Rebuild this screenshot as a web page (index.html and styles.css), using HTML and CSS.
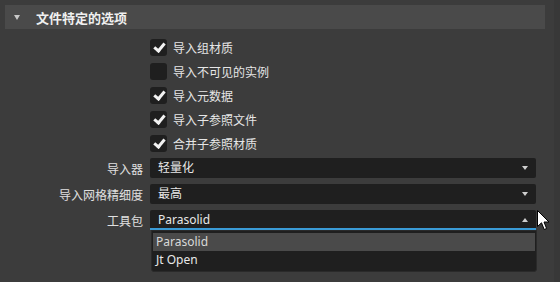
FILE: index.html
```html
<!DOCTYPE html>
<html lang="zh-CN">
<head>
    <meta charset="UTF-8">
    <title>文件特定的选项</title>
    <link rel="stylesheet" href="styles.css">
</head>
<body>
    <div class="panel">
        <!-- Section header -->
        <div class="section-head">
            <span class="caret"></span>
            <span class="section-title">文件特定的选项</span>
        </div>

        <div class="form">
            <div class="checks">
                <label class="check"><span class="box on"></span>导入组材质</label>
                <label class="check"><span class="box"></span>导入不可见的实例</label>
                <label class="check"><span class="box on"></span>导入元数据</label>
                <label class="check"><span class="box on"></span>导入子参照文件</label>
                <label class="check"><span class="box on"></span>合并子参照材质</label>
            </div>

            <div class="fields">
                <div class="field">
                    <span class="field-label">导入器</span>
                    <div class="select">轻量化<span class="arrow"></span></div>
                </div>
                <div class="field">
                    <span class="field-label">导入网格精细度</span>
                    <div class="select">最高<span class="arrow"></span></div>
                </div>
                <div class="field">
                    <span class="field-label">工具包</span>
                    <div class="select open">Parasolid<span class="arrow up"></span>
                        <ul class="menu">
                            <li class="menu-item active">Parasolid</li>
                            <li class="menu-item">Jt Open</li>
                        </ul>
                    </div>
                </div>
            </div>
        </div>
    </div>

    <div class="scrollbar"></div>

    <!-- Mouse pointer -->
    <svg class="pointer" width="13" height="21" viewBox="0 0 13 21" xmlns="http://www.w3.org/2000/svg">
        <path d="M0.5 0.5 L0.5 16.5 L4.5 12.8 L7.2 19.5 L9.6 18.5 L7 12 L12 12 Z" fill="#fff" stroke="#000" stroke-width="1"/>
    </svg>
</body>
</html>
```

FILE: styles.css
```css
body {
    margin: 0;
    padding: 0;
    width: 560px;
    height: 282px;
    background-color: #3c3c3c;
    color: #e0e0e0;
    font-family: "Noto Sans", "Noto Sans CJK SC", sans-serif;
    font-size: 12px;
    position: relative;
    overflow: hidden;
    display: flex;
}

.panel {
    width: 554px;
}

.scrollbar {
    width: 6px;
    background: #383838;
}

.section-head {
    margin: 5px 0 0 5px;
    width: 540px;
    height: 24px;
    background: #4a4a4a;
    display: flex;
    align-items: center;
}

.caret {
    width: 0;
    height: 0;
    margin-left: 9px;
    border-left: 3.5px solid transparent;
    border-right: 3.5px solid transparent;
    border-top: 5px solid #c8c8c8;
}

.section-title {
    margin-left: 16px;
    font-family: "Noto Sans CJK SC", sans-serif;
    font-size: 13px;
    font-weight: bold;
    color: #f0f0f0;
}

.form {
    padding-top: 6px;
}

.checks {
    padding-left: 150px;
    display: flex;
    flex-direction: column;
}

.check {
    height: 24px;
    display: flex;
    align-items: center;
    gap: 6px;
    font-family: "Noto Sans CJK SC", sans-serif;
    color: #e6e6e6;
}

.box {
    width: 17px;
    height: 17px;
    border-radius: 3px;
    background: #1f1f1f;
    position: relative;
}

.box.on::after {
    content: "";
    position: absolute;
    left: 6px;
    top: 2px;
    width: 4px;
    height: 8px;
    border-right: 3px solid #f2f2f2;
    border-bottom: 3px solid #f2f2f2;
    transform: rotate(40deg);
}

.fields {
    margin-top: 3px;
    display: flex;
    flex-direction: column;
    gap: 6px;
}

.field {
    display: flex;
    align-items: center;
    gap: 7px;
}

.field-label {
    width: 143px;
    text-align: right;
    font-family: "Noto Sans CJK SC", sans-serif;
    color: #e0e0e0;
}

.select {
    width: 378px;
    height: 20px;
    padding: 0 0 0 8px;
    background: #1f1f1f;
    border-radius: 2px;
    display: flex;
    align-items: center;
    position: relative;
    font-family: "Noto Sans", "Noto Sans CJK SC", sans-serif;
    color: #e8e8e8;
    line-height: 1;
}

.select.open {
    border-radius: 2px 2px 0 0;
    box-shadow: inset 0 -2px 0 #3a9bd6;
}

.arrow {
    position: absolute;
    right: 8px;
    top: 8px;
    width: 0;
    height: 0;
    border-left: 3.5px solid transparent;
    border-right: 3.5px solid transparent;
    border-top: 4px solid #cfcfcf;
}

.arrow.up {
    border-top: none;
    border-bottom: 4px solid #cfcfcf;
}

.menu {
    position: absolute;
    left: 1px;
    top: 20px;
    width: 382px;
    margin: 0;
    padding: 2px 1px 2px 1px;
    list-style: none;
    background: #1f1f1f;
    border: 1px solid #2a2a2a;
    border-radius: 0 0 3px 3px;
}

.menu-item {
    height: 18px;
    padding-left: 3px;
    display: flex;
    align-items: center;
    color: #e8e8e8;
}

.menu-item.active {
    background: #4a4a4a;
    color: #d8d8d8;
}

.pointer {
    position: absolute;
    left: 537px;
    top: 210px;
}
```
